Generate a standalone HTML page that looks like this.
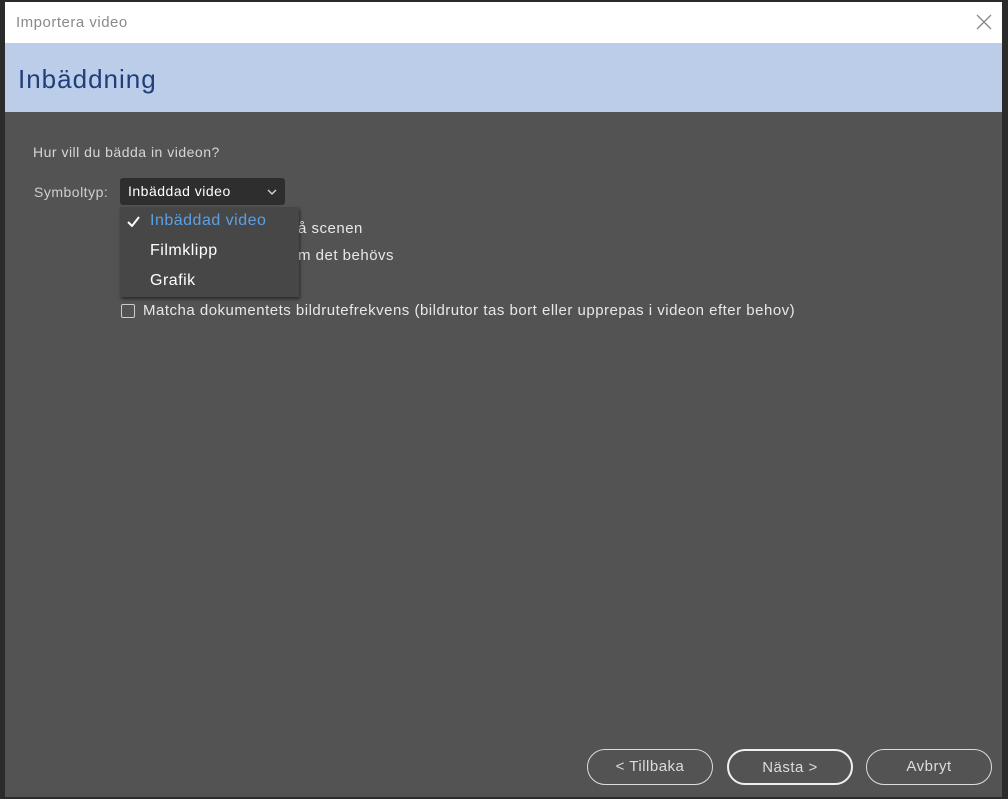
<!DOCTYPE html>
<html><head><meta charset="utf-8"><style>
*{margin:0;padding:0;box-sizing:border-box}
body{width:1008px;height:799px;background:#2b2b2b;position:relative;overflow:hidden;font-family:"Liberation Sans",sans-serif;letter-spacing:0.5px}
.dlg{position:absolute;left:5px;top:2px;width:997px;height:795px;background:#535353}
.title{position:absolute;left:0;top:0;width:100%;height:41px;background:#fff;color:#8a8a8a;font-size:15px;line-height:41px;padding-left:11px}
.close{position:absolute;right:10px;top:12px;width:16px;height:16px}
.head{position:absolute;left:0;top:41px;width:100%;height:69px;background:#bccde9;color:#1f3f7a;font-size:26px;line-height:72px;padding-left:13px;letter-spacing:1px}
.t{position:absolute;color:#d6d6d6;font-size:14px;white-space:nowrap}
.sel{position:absolute;left:115px;top:176px;width:165px;height:27px;background:#2e2e2e;border-radius:3px;color:#fff;font-size:14px;line-height:27px;padding-left:8px}
.menu{position:absolute;left:115px;top:205px;width:179px;height:90px;background:#474747;box-shadow:1px 2px 3px rgba(0,0,0,.5)}
.mi{position:absolute;left:30px;font-size:16px;color:#fff}
.cb{position:absolute;left:116px;top:302px;width:14px;height:14px;border:1px solid #ccc;border-radius:2px}
.btn{position:absolute;top:747px;width:126px;height:36px;border:1.5px solid #ddd;border-radius:18px;color:#ddd;font-size:15px;text-align:center;line-height:33px}
</style></head><body>
<div class="dlg">
<div class="title">Importera video
<svg class="close" viewBox="0 0 16 16"><path d="M1 1L15 15M15 1L1 15" stroke="#888" stroke-width="1.3"/></svg></div>
<div class="head">Inbäddning</div>
<div class="t" style="left:28px;top:142px">Hur vill du bädda in videon?</div>
<div class="t" style="left:29px;top:182px;color:#cfcfcf">Symboltyp:</div>
<div class="sel">Inbäddad video<svg style="position:absolute;right:8px;top:11px" width="10" height="6" viewBox="0 0 10 6"><path d="M1 1L5 5L9 1" stroke="#ddd" fill="none" stroke-width="1.3"/></svg></div>
<div class="t" style="left:293px;top:218px;font-size:15px;color:#e8e8e8">å scenen</div>
<div class="t" style="left:293px;top:245px;font-size:15px;color:#e8e8e8">m det behövs</div>
<div class="menu">
<svg style="position:absolute;left:7px;top:9px" width="13" height="11" viewBox="0 0 13 11"><path d="M1 6L5 10L12 1" stroke="#fff" fill="none" stroke-width="2"/></svg>
<div class="mi" style="top:5px;color:#5aa0e6">Inbäddad video</div>
<div class="mi" style="top:35px">Filmklipp</div>
<div class="mi" style="top:65px">Grafik</div>
</div>
<div class="cb"></div>
<div class="t" style="left:138px;top:300px;font-size:15px;color:#e8e8e8">Matcha dokumentets bildrutefrekvens (bildrutor tas bort eller upprepas i videon efter behov)</div>
<div class="btn" style="left:582px">&lt; Tillbaka</div>
<div class="btn" style="left:722px;border:2.5px solid #f0f0f0">Nästa &gt;</div>
<div class="btn" style="left:861px">Avbryt</div>
</div>
</body></html>
